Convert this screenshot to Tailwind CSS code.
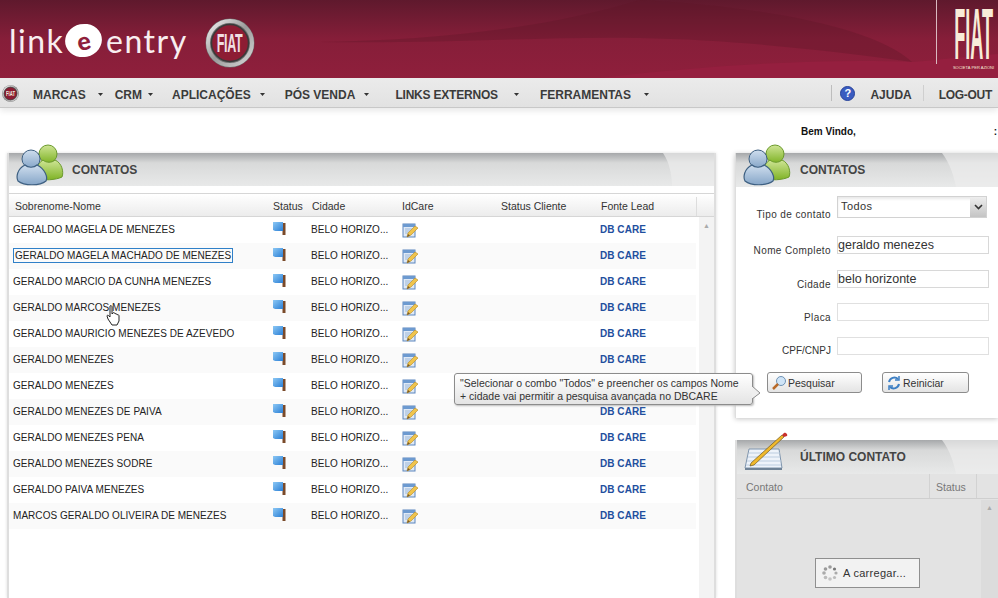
<!DOCTYPE html>
<html lang="pt">
<head>
<meta charset="utf-8">
<title>Link-e-entry</title>
<script src="https://cdn.jsdelivr.net/npm/@tailwindcss/browser@4"></script>
</head>
<body class="w-[998px] h-[598px] overflow-hidden bg-white font-['Liberation_Sans',Arial,sans-serif] text-[#222]">
<svg class="absolute w-0 h-0" width="0" height="0">
  <defs>
    <linearGradient id="gb" x1="0" y1="0" x2="0" y2="1"><stop offset="0" stop-color="#cfdeee"/><stop offset="1" stop-color="#86a6c8"/></linearGradient>
    <linearGradient id="gg" x1="0" y1="0" x2="0" y2="1"><stop offset="0" stop-color="#cfe596"/><stop offset="1" stop-color="#7fb326"/></linearGradient>
    <linearGradient id="fl" x1="0" y1="0" x2="1" y2="1"><stop offset="0" stop-color="#8cc8f5"/><stop offset="1" stop-color="#2b7fd5"/></linearGradient>
    <linearGradient id="pb" x1="0" y1="0" x2="1" y2="1"><stop offset="0" stop-color="#f2f2f2"/><stop offset=".5" stop-color="#9a9a9a"/><stop offset="1" stop-color="#d8d8d8"/></linearGradient>
    <symbol id="people" viewBox="0 0 48 42">
      <circle cx="32" cy="10" r="9" fill="url(#gg)" stroke="#6b9a2c"/>
      <path d="M20 34c-2-4 0-14 7-18 3 3 9 3 12 0 7 3 9 12 7 17-6 3-19 4-26 1z" fill="url(#gg)" stroke="#6b9a2c"/>
      <circle cx="15" cy="15" r="9" fill="url(#gb)" stroke="#3e6082"/>
      <path d="M2 37c-2-4-1-12 7-16 3 3 9 3 12 0 8 4 11 12 9 16-6 5-22 5-28 0z" fill="url(#gb)" stroke="#3e6082" stroke-width="1.200"/>
    </symbol>
    <symbol id="flag" viewBox="0 0 13 13">
      <rect x="9.500" y="1" width="3" height="12" fill="#7a4a2a"/>
      <path d="M0 0h10v9H2L0 8z" fill="url(#fl)"/>
    </symbol>
    <symbol id="edit" viewBox="0 0 16 16">
      <rect x="1" y="2" width="12" height="13" fill="#dfe9f6" stroke="#5c86bd"/>
      <rect x="1" y="2" width="12" height="3" fill="#6d9ad0"/>
      <path d="M3 7h8M3 9h5M3 11h4" stroke="#9db8d8"/>
      <path d="M5 15l1-4 7-7 3 2-7 7z" fill="#f0c44c" stroke="#b58a25" stroke-width=".6"/>
      <path d="M5 15l1-3 2 1.500z" fill="#7a5a2a"/>
    </symbol>
    <symbol id="badge" viewBox="0 0 50 50">
      <circle cx="25" cy="25" r="24.500" fill="#6d6d6d"/>
      <circle cx="25" cy="25" r="22" fill="none" stroke="url(#pb)" stroke-width="4"/>
      <circle cx="25" cy="25" r="18.500" fill="#8d1c33" stroke="#3a3a3a" stroke-width="1.500"/>
    </symbol>
    <symbol id="caret" viewBox="0 0 5 3"><path d="M0 0h5L2.500 3z" fill="#333"/></symbol>
  </defs>
</svg>

<header class="relative h-[78px] overflow-hidden bg-gradient-to-b from-[#5f192d] via-[#861e39] via-50% to-[#8f1f3c] flex items-start">
  <svg class="absolute inset-0" width="998" height="78" viewBox="0 0 998 78" fill="none">
    <path d="M640 0c110 6 230 24 272 62-70-10-170-22-272-24-90-2-200 6-320 4C430 40 540 30 640 0z" fill="#5f1629" opacity=".35"/>
    <path d="M912 62c26-2 60-6 86-8v24H600c100-12 220-20 312-16z" fill="#951f3f"/>
  </svg>
  <div class="relative flex items-center ml-[9px] mt-[22px] h-[38px] text-[32px] leading-none font-['Lato',sans-serif] font-normal text-[#f8eef0] tracking-[1.500px]">
    <span class="w-[56px]">link</span>
    <span class="relative w-[37px] h-[33px] mr-[4px] rounded-[50%] bg-white -rotate-12 flex items-center justify-center text-[25px] font-black text-[#8f1f3c] leading-none tracking-normal -mt-[2px]">e</span>
    <span>entry</span>
  </div>
  <div class="relative ml-[17px] mt-[18px] w-[50px] h-[50px] flex items-center justify-center">
    <svg class="absolute inset-0" width="50" height="50"><use href="#badge"/></svg>
    <span class="relative font-bold text-[25px] leading-none text-[#f0dfe2] scale-x-[.5] tracking-tight">FIAT</span>
  </div>
  <div class="relative ml-auto flex h-[64px]">
    <div class="w-px bg-[#d9b9c0]"></div>
    <div class="w-[61px] flex flex-col items-center pt-[10px] pl-[12px]">
      <span class="font-bold text-[#f8ecd8] text-[22px] leading-[16px] h-[16px] mt-[18px] scale-x-[.82] scale-y-[3.3] whitespace-nowrap">FIAT</span>
      <span class="text-[4px] leading-[6px] mt-[21px] text-[#f8ecd8] whitespace-nowrap">SOCIETÀ PER AZIONI</span>
    </div>
  </div>
</header>

<nav class="h-[30px] pt-[1px] bg-gradient-to-b from-[#ebebeb] to-[#e2e2e2] border-b border-[#c8c8c8] shadow-[0_3px_6px_#e9e9e9] flex items-center text-[12px] font-bold text-[#3b3b3b] whitespace-nowrap">
  <span class="relative ml-[2px] w-[17px] h-[17px] flex items-center justify-center"><svg class="absolute inset-0" width="17" height="17"><use href="#badge"/></svg><span class="relative text-[7px] leading-none font-bold text-[#eed] scale-x-[.6]">FIAT</span></span>
  <span class="ml-[14px] pt-[3px]">MARCAS</span><svg class="ml-[12px] mt-[2px]" width="5" height="3"><use href="#caret"/></svg>
  <span class="ml-[12px] pt-[3px]">CRM</span><svg class="ml-[6px] mt-[2px]" width="5" height="3"><use href="#caret"/></svg>
  <span class="ml-[19px] pt-[3px]">APLICAÇÕES</span><svg class="ml-[9px] mt-[2px]" width="5" height="3"><use href="#caret"/></svg>
  <span class="ml-[20px] pt-[3px]">PÓS VENDA</span><svg class="ml-[9px] mt-[2px]" width="5" height="3"><use href="#caret"/></svg>
  <span class="ml-[26px] pt-[3px] tracking-[-.2px]">LINKS EXTERNOS</span><svg class="ml-[16px] mt-[2px]" width="5" height="3"><use href="#caret"/></svg>
  <span class="ml-[21px] pt-[3px]">FERRAMENTAS</span><svg class="ml-[13px] mt-[2px]" width="5" height="3"><use href="#caret"/></svg>
  <span class="ml-auto w-px h-[16px] bg-[#bdbdbd]"></span>
  <span class="ml-[8px] w-[15px] h-[15px] rounded-full bg-[#3a5cc0] border border-[#27429a] text-white text-[11px] leading-[13px] text-center">?</span>
  <span class="ml-[15px] pt-[3px]">AJUDA</span>
  <span class="ml-[11px] w-px h-[16px] bg-[#cfcfcf]"></span>
  <span class="ml-[15px] mr-[6px] pt-[3px] tracking-[-.3px]">LOG-OUT</span>
</nav>

<div class="h-[45px] text-[10px] font-bold text-[#111] pt-[18px] pl-[801px] leading-[12px] flex">
  <span>Bem Vindo,</span><span class="ml-auto mr-px">:</span>
</div>

<main class="flex items-start pl-[7px] gap-[19px]">
  <section class="w-[709px] h-[445px] shrink-0 border-l-2 border-r-2 border-[#dedede] shadow-[0_0_3px_#ddd]">
    <div class="relative h-[33px] bg-gradient-to-b from-[#a6a8aa] via-[#d8d9d9] via-30% to-[#e8e9e9] flex items-center">
      <svg class="absolute right-0 top-0" width="60" height="33" viewBox="0 0 60 33"><path d="M9 0c7 10 9 24 9 33h42V0z" fill="#ececec" opacity=".7"/></svg>
      <svg class="absolute left-[7px] -top-[9px]" width="48" height="42"><use href="#people"/></svg>
      <h2 class="relative ml-[63px] text-[12px] font-bold text-[#444]">CONTATOS</h2>
    </div>
    <div class="mt-[7px] h-[24px] pt-[3px] grid grid-cols-[264px_38px_91px_99px_100px_95px_1fr] items-center border-y border-[#d6d6d6] bg-gradient-to-b from-[#fff] to-[#ececec] text-[10.500px] text-[#333]">
      <span class="pl-[6px]">Sobrenome-Nome</span><span>Status</span><span class="pl-px">Cidade</span><span>IdCare</span><span>Status Cliente</span><span>Fonte Lead</span><span class="h-full border-l border-[#ddd]"></span>
    </div>
    <div class="flex">
      <div class="w-[687px] text-[10px] tracking-[.05px] text-[#222]">
        <div class="h-[26px] pb-[2px] grid grid-cols-[264px_38px_91px_99px_100px_95px] items-center"><span class="pl-[4px]">GERALDO MAGELA DE MENEZES</span><svg width="13" height="13" class="-mt-[2px]"><use href="#flag"/></svg><span>BELO HORIZO...</span><svg width="16" height="16" class="mt-[2px]"><use href="#edit"/></svg><span></span><span class="font-bold text-[#1f4f9e] -ml-px">DB CARE</span></div>
        <div class="h-[26px] pb-[2px] grid grid-cols-[264px_38px_91px_99px_100px_95px] items-center bg-[#fafafa]"><span class="pl-[4px]"><span class="border border-[#3080c8] px-px py-px">GERALDO MAGELA MACHADO DE MENEZES</span></span><svg width="13" height="13" class="-mt-[2px]"><use href="#flag"/></svg><span>BELO HORIZO...</span><svg width="16" height="16" class="mt-[2px]"><use href="#edit"/></svg><span></span><span class="font-bold text-[#1f4f9e] -ml-px">DB CARE</span></div>
        <div class="h-[26px] pb-[2px] grid grid-cols-[264px_38px_91px_99px_100px_95px] items-center"><span class="pl-[4px]">GERALDO MARCIO DA CUNHA MENEZES</span><svg width="13" height="13" class="-mt-[2px]"><use href="#flag"/></svg><span>BELO HORIZO...</span><svg width="16" height="16" class="mt-[2px]"><use href="#edit"/></svg><span></span><span class="font-bold text-[#1f4f9e] -ml-px">DB CARE</span></div>
        <div class="h-[26px] pb-[2px] grid grid-cols-[264px_38px_91px_99px_100px_95px] items-center bg-[#fafafa]"><span class="pl-[4px]">GERALDO MARCOS MENEZES</span><svg width="13" height="13" class="-mt-[2px]"><use href="#flag"/></svg><span>BELO HORIZO...</span><svg width="16" height="16" class="mt-[2px]"><use href="#edit"/></svg><span></span><span class="font-bold text-[#1f4f9e] -ml-px">DB CARE</span></div>
        <div class="h-[26px] pb-[2px] grid grid-cols-[264px_38px_91px_99px_100px_95px] items-center"><span class="pl-[4px]">GERALDO MAURICIO MENEZES DE AZEVEDO</span><svg width="13" height="13" class="-mt-[2px]"><use href="#flag"/></svg><span>BELO HORIZO...</span><svg width="16" height="16" class="mt-[2px]"><use href="#edit"/></svg><span></span><span class="font-bold text-[#1f4f9e] -ml-px">DB CARE</span></div>
        <div class="h-[26px] pb-[2px] grid grid-cols-[264px_38px_91px_99px_100px_95px] items-center bg-[#fafafa]"><span class="pl-[4px]">GERALDO MENEZES</span><svg width="13" height="13" class="-mt-[2px]"><use href="#flag"/></svg><span>BELO HORIZO...</span><svg width="16" height="16" class="mt-[2px]"><use href="#edit"/></svg><span></span><span class="font-bold text-[#1f4f9e] -ml-px">DB CARE</span></div>
        <div class="h-[26px] pb-[2px] grid grid-cols-[264px_38px_91px_99px_100px_95px] items-center"><span class="pl-[4px]">GERALDO MENEZES</span><svg width="13" height="13" class="-mt-[2px]"><use href="#flag"/></svg><span>BELO HORIZO...</span><svg width="16" height="16" class="mt-[2px]"><use href="#edit"/></svg><span></span><span></span></div>
        <div class="h-[26px] pb-[2px] grid grid-cols-[264px_38px_91px_99px_100px_95px] items-center bg-[#fafafa]"><span class="pl-[4px]">GERALDO MENEZES DE PAIVA</span><svg width="13" height="13" class="-mt-[2px]"><use href="#flag"/></svg><span>BELO HORIZO...</span><svg width="16" height="16" class="mt-[2px]"><use href="#edit"/></svg><span></span><span class="font-bold text-[#1f4f9e] -ml-px">DB CARE</span></div>
        <div class="h-[26px] pb-[2px] grid grid-cols-[264px_38px_91px_99px_100px_95px] items-center"><span class="pl-[4px]">GERALDO MENEZES PENA</span><svg width="13" height="13" class="-mt-[2px]"><use href="#flag"/></svg><span>BELO HORIZO...</span><svg width="16" height="16" class="mt-[2px]"><use href="#edit"/></svg><span></span><span class="font-bold text-[#1f4f9e] -ml-px">DB CARE</span></div>
        <div class="h-[26px] pb-[2px] grid grid-cols-[264px_38px_91px_99px_100px_95px] items-center bg-[#fafafa]"><span class="pl-[4px]">GERALDO MENEZES SODRE</span><svg width="13" height="13" class="-mt-[2px]"><use href="#flag"/></svg><span>BELO HORIZO...</span><svg width="16" height="16" class="mt-[2px]"><use href="#edit"/></svg><span></span><span class="font-bold text-[#1f4f9e] -ml-px">DB CARE</span></div>
        <div class="h-[26px] pb-[2px] grid grid-cols-[264px_38px_91px_99px_100px_95px] items-center"><span class="pl-[4px]">GERALDO PAIVA MENEZES</span><svg width="13" height="13" class="-mt-[2px]"><use href="#flag"/></svg><span>BELO HORIZO...</span><svg width="16" height="16" class="mt-[2px]"><use href="#edit"/></svg><span></span><span class="font-bold text-[#1f4f9e] -ml-px">DB CARE</span></div>
        <div class="h-[26px] pb-[2px] grid grid-cols-[264px_38px_91px_99px_100px_95px] items-center bg-[#fafafa]"><span class="pl-[4px]">MARCOS GERALDO OLIVEIRA DE MENEZES</span><svg width="13" height="13" class="-mt-[2px]"><use href="#flag"/></svg><span>BELO HORIZO...</span><svg width="16" height="16" class="mt-[2px]"><use href="#edit"/></svg><span></span><span class="font-bold text-[#1f4f9e] -ml-px">DB CARE</span></div>
      </div>
      <div class="flex-1 ml-[3px] h-[381px] bg-[#f3f3f3] text-center text-[7px] text-[#aaa] pt-[4px]">▲</div>
    </div>
  </section>

  <aside class="flex-1 min-w-0 flex flex-col gap-[22px]">
    <section class="h-[265px] bg-white shadow-[0_1px_5px_#c4c4c4] border-l border-[#dedede]">
      <div class="relative h-[34px] bg-gradient-to-b from-[#a6a8aa] via-[#d8d9d9] via-30% to-[#e8e9e9] flex items-center">
        <svg class="absolute right-0 top-0" width="60" height="34" viewBox="0 0 60 34"><path d="M4 0c8 10 12 24 14 34h42V0z" fill="#ececec" opacity=".7"/></svg>
        <svg class="absolute left-[7px] -top-[9px]" width="48" height="42"><use href="#people"/></svg>
        <h2 class="relative ml-[64px] text-[12px] font-bold text-[#444]">CONTATOS</h2>
      </div>
      <form class="text-[10px] tracking-[.4px] text-[#333]">
        <div class="flex items-end mt-[9px] h-[22px]"><label class="w-[95px] text-right -mb-[4px]">Tipo de contato</label><div class="ml-[6px] w-[150px] h-[22px] border border-[#d2d2d2] flex justify-between text-[11px] pl-[3px] leading-[19px] shadow-[inset_0_2px_3px_#e8e8e8]">Todos<span class="w-[16px] h-[20px] bg-gradient-to-b from-[#eee] to-[#c4c4c4] flex items-center justify-center"><svg width="9" height="6" viewBox="0 0 9 6" fill="none" stroke="#333" stroke-width="1.600"><path d="M1 1l3.500 3.500L8 1"/></svg></span></div></div>
        <div class="flex items-end mt-[18px] h-[18px]"><label class="w-[95px] text-right -mb-[4px]">Nome Completo</label><div class="ml-[6px] w-[152px] h-[18px] border border-[#d8d8d8] text-[12.500px] tracking-normal leading-[17px]">geraldo menezes</div></div>
        <div class="flex items-end mt-[16px] h-[18px]"><label class="w-[95px] text-right -mb-[4px]">Cidade</label><div class="ml-[6px] w-[152px] h-[18px] border border-[#d8d8d8] text-[12.500px] tracking-normal leading-[17px]">belo horizonte</div></div>
        <div class="flex items-end mt-[15px] h-[18px]"><label class="w-[95px] text-right -mb-[4px]">Placa</label><div class="ml-[6px] w-[152px] h-[18px] border border-[#e0e0e0]"></div></div>
        <div class="flex items-end mt-[16px] h-[18px]"><label class="w-[95px] text-right tracking-normal -mb-[3px]">CPF/CNPJ</label><div class="ml-[6px] w-[152px] h-[18px] border border-[#e0e0e0]"></div></div>
        <div class="flex mt-[17px] ml-[31px] gap-[20px] text-[10.500px] tracking-normal text-[#333]">
          <button type="button" class="w-[95px] h-[21px] rounded-[3px] border border-[#8c8c8c] bg-gradient-to-b from-[#fff] to-[#e4e4e4] flex items-center pl-[3px] pt-[2px] gap-px"><svg width="16" height="16" viewBox="0 0 16 16" class="-mt-[2px]"><circle cx="10" cy="6" r="4.500" fill="#cfe4f7" stroke="#6f93b5"/><path d="M7 9l-5 5" stroke="#b86a2a" stroke-width="2.500"/></svg>Pesquisar</button>
          <button type="button" class="w-[87px] h-[21px] rounded-[3px] border border-[#8c8c8c] bg-gradient-to-b from-[#fff] to-[#e4e4e4] flex items-center pl-[3px] pt-[2px] gap-px"><svg width="16" height="16" viewBox="0 0 16 16" fill="none" stroke="#3d7fc4" stroke-width="2" class="-mt-[2px]"><path d="M3 7a5.500 5.500 0 0 1 9-3"/><path d="M13 9a5.500 5.500 0 0 1-9 3"/><path d="M13 1v4H9M3 15v-4h4" stroke-width="1.500"/></svg>Reiniciar</button>
        </div>
      </form>
    </section>

    <section class="relative h-[158px] bg-[#e3e3e3] border-l-2 border-[#dedede]">
      <div class="relative h-[34px] bg-gradient-to-b from-[#a6a8aa] via-[#d8d9d9] via-30% to-[#e8e9e9] flex items-center">
        <svg class="absolute right-0 top-0" width="60" height="34" viewBox="0 0 60 34"><path d="M4 0c8 10 12 24 14 34h42V0z" fill="#ececec" opacity=".7"/></svg>
        <svg class="absolute left-[6px] -top-[10px]" width="46" height="44" viewBox="0 0 46 44"><path d="M6 19h30l3 19H2z" fill="#eef3fa" stroke="#7f95ad"/><path d="M6 23h31M5 27h32M4 31h34M3 35h35" stroke="#bccde0"/><path d="M2 38h37v2H2z" fill="#6f8296"/><path d="M8 33L39 5l2 2-30 28-4 1z" fill="#f0b92c" stroke="#5a4412" stroke-width=".6"/><path d="M39 5l2-2c2-1 4 2 3 3l-3 1z" fill="#c9302c"/></svg>
        <h2 class="relative ml-[63px] text-[12px] font-bold text-[#444]">ÚLTIMO CONTATO</h2>
      </div>
      <div class="h-[25px] flex items-stretch text-[10.500px] text-[#777] border-b border-[#cfcfcf] leading-[27px]">
        <span class="w-[193px] pl-[9px] border-r border-[#d2d2d2]">Contato</span>
        <span class="w-[47px] pl-[6px] border-r border-[#d2d2d2]">Status</span>
      </div>
      <div class="absolute right-0 top-[60px] bottom-0 w-[17px] bg-[#dcdcdc] text-center text-[7px] text-[#aaa] pt-[3px]">▲</div>
      <div class="absolute left-[78px] top-[118px] w-[105px] h-[30px] border border-[#8f8f8f] bg-[#f2f2f2] flex items-center pl-[6px] gap-[5px] text-[11px] text-[#333] tracking-[.3px]">
        <svg width="16" height="16" viewBox="0 0 16 16" fill="#9a9a9a"><circle cx="8" cy="2" r="1.800"/><circle cx="12.500" cy="4" r="1.600" fill="#777"/><circle cx="14" cy="8" r="1.600" fill="#aaa"/><circle cx="12.500" cy="12.500" r="1.600" fill="#bbb"/><circle cx="8" cy="14" r="1.800" fill="#c4c4c4"/><circle cx="3.500" cy="12.500" r="1.800" fill="#bbb"/><circle cx="2" cy="8" r="1.800" fill="#aaa"/><circle cx="3.500" cy="4" r="1.800"/></svg>
        A carregar...
      </div>
    </section>
  </aside>
</main>

<div class="absolute left-[454px] top-[373px] w-[299px] h-[32px] rounded-[3px] border border-[#8c8c8c] bg-gradient-to-b from-[#fff] to-[#e4e4e4] px-[5px] pt-[3px] text-[10.500px] leading-[13px] text-[#333] shadow-[1px_1px_2px_#bbb]">
  <p class="whitespace-nowrap">"Selecionar o combo "Todos" e preencher os campos Nome</p>
  <p class="whitespace-nowrap">+ cidade vai permitir a pesquisa avançada no DBCARE</p>
  <svg class="absolute -right-[9px] top-[12px]" width="9" height="14" viewBox="0 0 9 14"><path d="M0 0l8 7-8 6" fill="#efefef" stroke="#8c8c8c"/></svg>
</div>

<svg class="absolute left-[106px] top-[304px]" width="16" height="22" viewBox="0 0 16 22"><path d="M4 2c1-1 2 0 2 1v7l1-1c1-1 2 0 2 1 1-1 2 0 2 1 1-1 2 0 2 1v5l-2 4H6l-4-6-1-3c0-1 1-1 2 0l1 1z" fill="#fff" stroke="#222"/></svg>
</body>
</html>
